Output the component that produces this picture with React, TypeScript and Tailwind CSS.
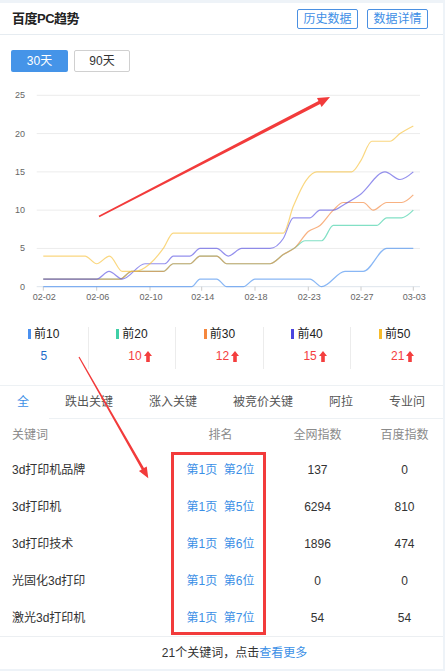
import React from 'react';

type Pt = [number, number];

const X0 = 43.3;
const Y0 = 286.7;
const UNIT = 7.656;
const yOf = (v: number) => Y0 - v * UNIT;

// monotone cubic, like the smooth lines of the chart lib
const smoothPath = (data: Pt[]) => {
  const p = data.map(([x, v]) => [x, yOf(v)] as Pt);
  const n = p.length;
  const s: number[] = [];
  for (let i = 0; i < n - 1; i++) s.push((p[i + 1][1] - p[i][1]) / (p[i + 1][0] - p[i][0]));
  const t: number[] = new Array(n).fill(0);
  for (let i = 1; i < n - 1; i++) {
    const s0 = s[i - 1];
    const s1 = s[i];
    if (s0 * s1 <= 0) continue;
    const h0 = p[i][0] - p[i - 1][0];
    const h1 = p[i + 1][0] - p[i][0];
    const q = (s0 * h1 + s1 * h0) / (h0 + h1);
    t[i] = (Math.sign(s0) + Math.sign(s1)) * Math.min(Math.abs(s0), Math.abs(s1), 0.5 * Math.abs(q));
  }
  t[0] = (3 * s[0] - t[1]) / 2;
  t[n - 1] = (3 * s[n - 2] - t[n - 2]) / 2;
  if (s[0] === 0) t[0] = 0;
  if (s[n - 2] === 0) t[n - 1] = 0;
  let d = `M${p[0][0]},${p[0][1]}`;
  for (let i = 0; i < n - 1; i++) {
    const dx = (p[i + 1][0] - p[i][0]) / 3;
    d += ` C${p[i][0] + dx},${p[i][1] + dx * t[i]} ${p[i + 1][0] - dx},${p[i + 1][1] - dx * t[i + 1]} ${p[i + 1][0]},${p[i + 1][1]}`;
  }
  return d;
};

const series: { color: string; data: Pt[] }[] = [
  {
    color: '#4a90f0',
    data: [[X0, 0], [191.7, 0], [200, 1], [216.7, 1], [226.7, 0], [243.3, 0], [255, 1], [310, 1], [321.7, 0], [345, 2], [363.3, 2], [386.7, 5], [413.3, 5]],
  },
  {
    color: '#3fcfa6',
    data: [[X0, 1], [120, 1], [131.7, 2], [163.3, 2], [173.3, 3], [190, 3], [200, 4], [216.7, 4], [226.7, 3], [270, 3], [283.3, 4.2], [295, 5.1], [305, 6], [321.7, 6], [333.3, 8], [376.7, 8], [386.7, 9], [401.7, 9], [413.3, 10]],
  },
  {
    color: '#f5873e',
    data: [[X0, 1], [120, 1], [131.7, 2], [163.3, 2], [173.3, 3], [190, 3], [200, 4], [216.7, 4], [226.7, 3], [270, 3], [283.3, 4.2], [295, 5.1], [308.3, 7.2], [320, 8], [333.3, 10], [343.3, 11], [363.3, 11], [373.3, 10], [386.7, 11], [401.7, 11], [413.3, 12]],
  },
  {
    color: '#5b55e4',
    data: [[X0, 1], [96.7, 1], [109, 2], [122.3, 1], [145, 3], [165, 3], [173.3, 4], [190, 4], [200, 5], [216.7, 5], [228.3, 4], [241.7, 5], [270, 5], [283.3, 6.3], [293.3, 9], [310, 9], [320, 10], [333.3, 10], [345, 10.8], [360, 12], [385, 15], [400, 14], [413.3, 15]],
  },
  {
    color: '#f8c23a',
    data: [[X0, 4], [85, 4], [96.7, 3], [109.5, 4], [122.3, 2], [135, 2], [150, 3], [163.3, 5], [173.3, 7], [283.3, 7], [293.3, 10.5], [306.7, 14], [316.7, 15], [351.7, 15], [361, 16.5], [371.7, 19], [390, 19], [400, 20], [413.3, 21]],
  },
];

const ticks = [
  { x: 43.3, label: '02-02' },
  { x: 96.7, label: '02-06' },
  { x: 150, label: '02-10' },
  { x: 201.7, label: '02-14' },
  { x: 255, label: '02-18' },
  { x: 308.3, label: '02-23' },
  { x: 361, label: '02-27' },
  { x: 413.3, label: '03-03' },
];

const stats = [
  { label: '前10', bar: 'bg-[#4a90f0]', value: '5', up: false },
  { label: '前20', bar: 'bg-[#3fcfa6]', value: '10', up: true },
  { label: '前30', bar: 'bg-[#f5873e]', value: '12', up: true },
  { label: '前40', bar: 'bg-[#4b45e0]', value: '15', up: true },
  { label: '前50', bar: 'bg-[#f7bb2a]', value: '21', up: true },
];

const tabs = ['全', '跌出关键', '涨入关键', '被竞价关键', '阿拉', '专业问'];

const rows = [
  { kw: '3d打印机品牌', page: 1, pos: 2, all: '137', baidu: '0' },
  { kw: '3d打印机', page: 1, pos: 5, all: '6294', baidu: '810' },
  { kw: '3d打印技术', page: 1, pos: 6, all: '1896', baidu: '474' },
  { kw: '光固化3d打印', page: 1, pos: 6, all: '0', baidu: '0' },
  { kw: '激光3d打印机', page: 1, pos: 7, all: '54', baidu: '54' },
];

const UpArrow = () => (
  <svg width="8" height="11" viewBox="0 0 8 11" className="ml-[2px]">
    <path d="M4 0 L8 5 L5.8 5 L5.8 11 L2.2 11 L2.2 5 L0 5 Z" fill="#f43e3e" />
  </svg>
);

const TrendChart = () => (
  <svg width="443" height="230" viewBox="0 80 443 230" className="block">
    {[5, 10, 15, 20, 25].map(v => (
      <line key={v} x1="36.7" x2="420" y1={yOf(v)} y2={yOf(v)} stroke="#ececec" strokeWidth="1" />
    ))}
    <line x1="36.7" x2="420" y1={Y0} y2={Y0} stroke="#dde4ec" strokeWidth="1" />
    {[0, 5, 10, 15, 20, 25].map(v => (
      <text key={v} x="25" y={yOf(v) + 3} textAnchor="end" fontSize="9" fill="#666">
        {v}
      </text>
    ))}
    {ticks.map(t => (
      <g key={t.label}>
        <line x1={t.x} x2={t.x} y1={Y0} y2={Y0 + 4} stroke="#ccc" strokeWidth="1" />
        <text x={t.x + 1} y="300" textAnchor="middle" fontSize="9" fill="#666">
          {t.label}
        </text>
      </g>
    ))}
    {series.map(s => (
      <path key={s.color} d={smoothPath(s.data)} fill="none" stroke={s.color} strokeOpacity="0.65" strokeWidth="1.2" />
    ))}
  </svg>
);

const App: React.FC = () => {
  return (
    <div className="relative w-[445px] h-[671px] overflow-hidden bg-[#eef3f8] pt-[3px] font-['Liberation_Sans','Noto_Sans_CJK_SC',sans-serif]">
      <div className="w-[443px] h-[666px] bg-white flex flex-col">
        {/* Header */}
        <div className="h-[32px] flex items-center justify-between pl-[12px] pr-[15px] border-b border-[#e6ecf1]">
          <h2 className="text-[13px] font-bold text-[#222] tracking-[-0.5px]">百度PC趋势</h2>
          <div className="flex gap-[9px]">
            <button className="w-[61px] h-[20px] border border-[#4a90e2] rounded-[2px] text-[12px] text-[#3d8ee6] leading-none">
              历史数据
            </button>
            <button className="w-[61px] h-[20px] border border-[#4a90e2] rounded-[2px] text-[12px] text-[#3d8ee6] leading-none">
              数据详情
            </button>
          </div>
        </div>

        {/* Period */}
        <div className="flex gap-[6px] pl-[11px] pt-[15px]">
          <button className="w-[57px] h-[22px] bg-[#4594e8] rounded-[2px] text-white text-[12px] leading-none">30天</button>
          <button className="w-[56px] h-[22px] border border-[#d0d0d0] rounded-[2px] text-[#333] text-[12px] leading-none">90天</button>
        </div>

        {/* Chart */}
        <div className="mt-[8px]">
          <TrendChart />
        </div>

        {/* Stats */}
        <div className="grid grid-cols-5 w-[438px] pt-[17px] pb-[16px]">
          {stats.map((s, i) => (
            <div key={s.label} className={`h-[42px] flex flex-col items-center ${i > 0 ? 'border-l border-[#ececec]' : ''}`}>
              <div className="flex items-center h-[14px] text-[12px] text-[#222]">
                <span className={`w-[3px] h-[10px] mr-[3px] ${s.bar}`} />
                {s.label}
              </div>
              {s.up ? (
                <div className="flex items-center h-[14px] mt-[8px] pl-[16px] text-[12px] text-[#f43e3e]">
                  {s.value}
                  <UpArrow />
                </div>
              ) : (
                <div className="flex items-center h-[14px] mt-[8px] text-[12px] text-[#1c6dc9]">{s.value}</div>
              )}
            </div>
          ))}
        </div>

        {/* Tabs */}
        <div className="border-t border-[#edf1f4]">
          <div className="h-[32px] flex items-center gap-[36px] pl-[17px] text-[12px] text-[#555] whitespace-nowrap">
            {tabs.map((t, i) => (
              <span key={t} className={i === 0 ? 'text-[#3d8ee6]' : ''}>
                {t}
              </span>
            ))}
          </div>
          <div className="ml-[49px] h-px bg-[#edf1f4]" />
        </div>

        {/* Table */}
        <div className="grid grid-cols-[176px_89px_105px_69px] h-[32px] items-center text-[12px] text-[#8a8a8a]">
          <span className="pl-[12px]">关键词</span>
          <span className="text-center">排名</span>
          <span className="text-center">全网指数</span>
          <span className="text-center">百度指数</span>
        </div>
        {rows.map(r => (
          <div key={r.kw} className="grid grid-cols-[176px_89px_105px_69px] h-[37px] items-center text-[12px] text-[#333]">
            <span className="pl-[12px]">{r.kw}</span>
            <span className="text-center text-[#3b8fe6] whitespace-nowrap">
              第{r.page}页&nbsp;&nbsp;第{r.pos}位
            </span>
            <span className="text-center">{r.all}</span>
            <span className="text-center">{r.baidu}</span>
          </div>
        ))}

        {/* Footer */}
        <div className="border-t border-[#eceff2] h-[33px] flex items-center justify-center pl-[26px] text-[12px] text-[#333]">
          21个关键词，点击<span className="text-[#3b8fe6]">查看更多</span>
        </div>
      </div>

      {/* Annotations drawn over the screenshot */}
      <svg width="445" height="671" className="absolute left-0 top-0 pointer-events-none">
        <polygon
          points="98.63,215.79 318.48,100.9 317,98.05 330,97 321.6,106.95 320.12,104.1 99.37,217.21"
          fill="#f23b3b"
        />
        <polygon
          points="79.52,356.7 143.97,468.11 146.75,466.52 148.3,478.3 138.93,470.98 141.71,469.39 78.48,357.3"
          fill="#f23b3b"
        />
      </svg>
      <div className="absolute left-[171px] top-[452px] w-[95px] h-[183px] border-[3px] border-[#f23b3b]" />
    </div>
  );
};

export default App;
